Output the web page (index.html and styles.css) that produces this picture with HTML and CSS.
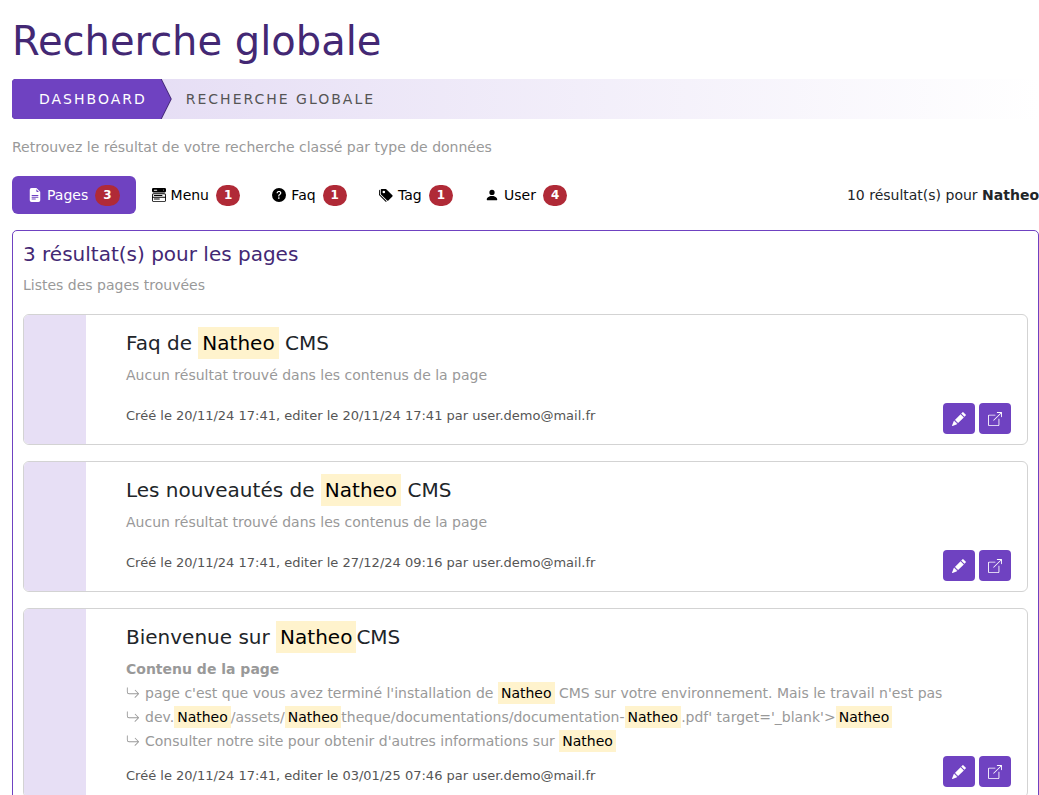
FILE: index.html
```html
<!DOCTYPE html>
<html lang="fr">
<head>
<meta charset="utf-8">
<title>Recherche globale</title>
<link rel="stylesheet" href="styles.css">
</head>
<body>
<svg class="sprite" aria-hidden="true">
  <symbol id="i-file" viewBox="0 0 16 16"><path d="M9.293 0H4a2 2 0 0 0-2 2v12a2 2 0 0 0 2 2h8a2 2 0 0 0 2-2V4.707A1 1 0 0 0 13.707 4L10 .293A1 1 0 0 0 9.293 0M9.500 3.500v-2l3 3h-2a1 1 0 0 1-1-1M4.500 9a.5.5 0 0 1 0-1h7a.5.5 0 0 1 0 1zM4 10.500a.5.5 0 0 1 .5-.5h7a.5.5 0 0 1 0 1h-7a.5.5 0 0 1-.5-.5m.5 2.500a.5.5 0 0 1 0-1h4a.5.5 0 0 1 0 1z"/></symbol>
  <symbol id="i-menu" viewBox="0 0 16 16"><path d="M1.500 0A1.500 1.500 0 0 0 0 1.500v2A1.500 1.500 0 0 0 1.500 5h13A1.500 1.500 0 0 0 16 3.500v-2A1.500 1.500 0 0 0 14.500 0zm1 2h3a.5.5 0 0 1 0 1h-3a.5.5 0 0 1 0-1m9.927.427A.25.25 0 0 1 12.604 2h.792a.25.25 0 0 1 .177.427l-.396.396a.25.25 0 0 1-.354 0zM0 8a2 2 0 0 1 2-2h12a2 2 0 0 1 2 2v6a2 2 0 0 1-2 2H2a2 2 0 0 1-2-2zm1 3v3a1 1 0 0 0 1 1h12a1 1 0 0 0 1-1v-3zm14-1V8a1 1 0 0 0-1-1H2a1 1 0 0 0-1 1v2zM2 8.500a.5.5 0 0 1 .5-.5h9a.5.5 0 0 1 0 1h-9a.5.5 0 0 1-.5-.5m0 4a.5.5 0 0 1 .5-.5h6a.5.5 0 0 1 0 1h-6a.5.5 0 0 1-.5-.5"/></symbol>
  <symbol id="i-help" viewBox="0 0 16 16"><path d="M16 8A8 8 0 1 1 0 8a8 8 0 0 1 16 0M5.496 6.033h.825c.138 0 .248-.113.266-.25.09-.656.54-1.134 1.342-1.134.686 0 1.314.343 1.314 1.168 0 .635-.374.927-.965 1.371-.673.489-1.206 1.060-1.168 1.987l.003.217a.25.25 0 0 0 .25.246h.811a.25.25 0 0 0 .25-.25v-.105c0-.718.273-.927 1.010-1.486.609-.463 1.244-.977 1.244-2.056 0-1.511-1.276-2.241-2.673-2.241-1.267 0-2.655.59-2.750 2.286a.237.237 0 0 0 .241.247m2.325 6.443c.61 0 1.029-.394 1.029-.927 0-.552-.42-.94-1.029-.94-.584 0-1.009.388-1.009.94 0 .533.425.927 1.010.927z"/></symbol>
  <symbol id="i-tags" viewBox="0 0 16 16"><path d="M2 2a1 1 0 0 1 1-1h4.586a1 1 0 0 1 .707.293l7 7a1 1 0 0 1 0 1.414l-4.586 4.586a1 1 0 0 1-1.414 0l-7-7A1 1 0 0 1 2 6.586zm3.500 4a1.500 1.500 0 1 0 0-3 1.500 1.500 0 0 0 0 3"/><path d="M1.293 7.793A1 1 0 0 1 1 7.086V2a1 1 0 0 0-1 1v4.586a1 1 0 0 0 .293.707l7 7a1 1 0 0 0 1.414 0l.043-.043z"/></symbol>
  <symbol id="i-user" viewBox="0 0 16 16"><path d="M3 14s-1 0-1-1 1-4 6-4 6 3 6 4-1 1-1 1zm5-6a3 3 0 1 0 0-6 3 3 0 0 0 0 6"/></symbol>
  <symbol id="i-pencil" viewBox="0 0 16 16"><path d="M12.854.146a.5.5 0 0 0-.707 0L10.500 1.793 14.207 5.500l1.647-1.646a.5.5 0 0 0 0-.708zm.646 6.061L9.793 2.500 3.293 9H3.500a.5.5 0 0 1 .5.5v.5h.5a.5.5 0 0 1 .5.5v.5h.5a.5.5 0 0 1 .5.5v.5h.5a.5.5 0 0 1 .5.5v.207zm-7.468 7.468A.5.5 0 0 1 6 13.500V13h-.5a.5.5 0 0 1-.5-.5V12h-.5a.5.5 0 0 1-.5-.5V11h-.5a.5.5 0 0 1-.5-.5V10h-.5a.5.5 0 0 1-.175-.032l-.179.178a.5.5 0 0 0-.11.168l-2 5a.5.5 0 0 0 .65.65l5-2a.5.5 0 0 0 .168-.11z"/></symbol>
  <symbol id="i-open" viewBox="0 0 16 16"><path d="M8.636 3.500a.5.5 0 0 0-.5-.5H1.500A1.500 1.500 0 0 0 0 4.500v10A1.500 1.500 0 0 0 1.500 16h10a1.500 1.500 0 0 0 1.500-1.500V7.864a.5.5 0 0 0-1 0V14.500a.5.5 0 0 1-.5.5h-10a.5.5 0 0 1-.5-.5v-10a.5.5 0 0 1 .5-.5h6.636a.5.5 0 0 0 .5-.5"/><path d="M16 .5a.5.5 0 0 0-.5-.5h-5a.5.5 0 0 0 0 1h3.793L6.146 9.146a.5.5 0 1 0 .708.708L15 1.707V5.500a.5.5 0 0 0 1 0z"/></symbol>
  <symbol id="i-return" viewBox="0 0 16 16"><path d="M1.500 1.500A.5.5 0 0 0 1 2v4.800a2.500 2.500 0 0 0 2.500 2.500h9.793l-3.347 3.346a.5.5 0 0 0 .708.708l4.200-4.200a.5.5 0 0 0 0-.708l-4-4a.5.5 0 0 0-.708.708L13.293 8.300H3.500A1.500 1.500 0 0 1 2 6.800V2a.5.5 0 0 0-.5-.5"/></symbol>
</svg>

<main class="page">
  <h1 class="page-title">Recherche globale</h1>

  <nav class="crumbs" aria-label="Fil d'Ariane">
    <a class="crumb-link" href="#"><span>Dashboard</span></a>
    <span class="crumb-current">Recherche globale</span>
  </nav>

  <p class="intro">Retrouvez le résultat de votre recherche classé par type de données</p>

  <div class="toolbar">
    <div class="tabs" role="tablist">
      <button class="tab tab-active" role="tab" aria-selected="true"><svg class="icon"><use href="#i-file"/></svg>Pages<span class="badge">3</span></button>
      <button class="tab" role="tab"><svg class="icon"><use href="#i-menu"/></svg>Menu<span class="badge">1</span></button>
      <button class="tab" role="tab"><svg class="icon"><use href="#i-help"/></svg>Faq<span class="badge">1</span></button>
      <button class="tab" role="tab"><svg class="icon"><use href="#i-tags"/></svg>Tag<span class="badge">1</span></button>
      <button class="tab" role="tab"><svg class="icon"><use href="#i-user"/></svg>User<span class="badge">4</span></button>
    </div>
    <div class="total">10 résultat(s) pour <b>Natheo</b></div>
  </div>

  <section class="panel">
    <h2 class="panel-title">3 résultat(s) pour les pages</h2>
    <p class="panel-sub">Listes des pages trouvées</p>

    <article class="card">
      <div class="card-side"></div>
      <div class="card-body">
        <h3 class="card-title">Faq de <mark>Natheo</mark> CMS</h3>
        <p class="card-text card-empty">Aucun résultat trouvé dans les contenus de la page</p>
        <div class="card-foot">
          <p class="meta">Créé le 20/11/24 17:41, editer le 20/11/24 17:41 par user.demo@mail.fr</p>
          <div class="actions">
            <a class="action" href="#" aria-label="Modifier"><svg class="icon"><use href="#i-pencil"/></svg></a>
            <a class="action" href="#" aria-label="Ouvrir"><svg class="icon"><use href="#i-open"/></svg></a>
          </div>
        </div>
      </div>
    </article>

    <article class="card">
      <div class="card-side"></div>
      <div class="card-body">
        <h3 class="card-title">Les nouveautés de <mark>Natheo</mark> CMS</h3>
        <p class="card-text card-empty">Aucun résultat trouvé dans les contenus de la page</p>
        <div class="card-foot">
          <p class="meta">Créé le 20/11/24 17:41, editer le 27/12/24 09:16 par user.demo@mail.fr</p>
          <div class="actions">
            <a class="action" href="#" aria-label="Modifier"><svg class="icon"><use href="#i-pencil"/></svg></a>
            <a class="action" href="#" aria-label="Ouvrir"><svg class="icon"><use href="#i-open"/></svg></a>
          </div>
        </div>
      </div>
    </article>

    <article class="card">
      <div class="card-side"></div>
      <div class="card-body">
        <h3 class="card-title">Bienvenue sur <mark>Natheo</mark>CMS</h3>
        <div class="card-text">
          <b>Contenu de la page</b>
          <ul class="hits">
            <li><svg class="icon"><use href="#i-return"/></svg><span>page c'est que vous avez terminé l'installation de <mark>Natheo</mark> CMS sur votre environnement. Mais le travail n'est pas</span></li>
            <li><svg class="icon"><use href="#i-return"/></svg><span>dev.<mark>Natheo</mark>/assets/<mark>Natheo</mark>theque/documentations/documentation-<mark>Natheo</mark>.pdf' target='_blank'&gt;<mark>Natheo</mark></span></li>
            <li><svg class="icon"><use href="#i-return"/></svg><span>Consulter notre site pour obtenir d'autres informations sur <mark>Natheo</mark></span></li>
          </ul>
        </div>
        <div class="card-foot card-foot-end">
          <p class="meta">Créé le 20/11/24 17:41, editer le 03/01/25 07:46 par user.demo@mail.fr</p>
          <div class="actions">
            <a class="action" href="#" aria-label="Modifier"><svg class="icon"><use href="#i-pencil"/></svg></a>
            <a class="action" href="#" aria-label="Ouvrir"><svg class="icon"><use href="#i-open"/></svg></a>
          </div>
        </div>
      </div>
    </article>
  </section>
</main>
</body>
</html>
```

FILE: styles.css
```css
* { box-sizing: border-box; }

body {
  margin: 0;
  background: #fff;
  color: #212529;
  font-family: Verdana, "DejaVu Sans", sans-serif;
  font-size: 14px;
  line-height: 24px;
}

h1, h2, h3, p, ul { margin: 0; padding: 0; font-weight: 400; }

.sprite { display: none; }

.icon { width: 14px; height: 14px; fill: currentColor; flex: none; }

.page {
  height: 100vh;
  overflow: hidden;
  padding: 17px 0 0 12px;
}

.page-title {
  margin-bottom: 14px;
  color: #432874;
  font-size: 40px;
  line-height: 48px;
}

.crumbs {
  display: flex;
  height: 40px;
  border-radius: 4px;
  background: linear-gradient(to right, #e2d9f3, #fff);
  line-height: 40px;
  letter-spacing: 2px;
  text-transform: uppercase;
  overflow: hidden;
}

.crumb-link {
  padding-right: 1px;
  background: #432874;
  color: #fff;
  text-decoration: none;
  clip-path: polygon(0 0, calc(100% - 10px) 0, 100% 50%, calc(100% - 10px) 100%, 0 100%);
}

.crumb-link span {
  display: block;
  padding: 0 24px 0 27px;
  background: #6f42c1;
  clip-path: polygon(0 0, calc(100% - 10px) 0, 100% 50%, calc(100% - 10px) 100%, 0 100%);
}

.crumb-current { padding-left: 14px; color: #555; }

.intro { margin: 16px 0 17px; color: #999; }

.toolbar { display: flex; justify-content: space-between; align-items: center; }

.tabs { display: flex; }

.tab {
  display: flex;
  align-items: center;
  gap: 5px;
  height: 38px;
  padding: 0 16px;
  border: 0;
  border-radius: 6px;
  background: none;
  color: #000;
  font: inherit;
}

.tab-active { background: #6f42c1; color: #fff; }

.badge {
  margin-left: 2px;
  padding: 0 8px;
  border-radius: 11px;
  background: #b02a37;
  color: #fff;
  font-size: 12px;
  font-weight: 700;
  line-height: 21px;
}

.panel {
  margin-top: 16px;
  padding: 10px;
  border: 1px solid #6f42c1;
  border-radius: 5px;
}

.panel-title { color: #432874; font-size: 20px; line-height: 26px; }

.panel-sub { margin: 6px 0 17px; color: #999; }

.card {
  display: flex;
  margin-bottom: 16px;
  border: 1px solid #d3d3d3;
  border-radius: 6px;
  overflow: hidden;
}

.card-side { flex: none; width: 62px; background: #e7dff5; }

.card-body { flex: 1; padding: 16px 16px 10px 40px; }

.card-title { margin-bottom: 7px; font-size: 20px; line-height: 25px; }

.card-text { color: #999; }

.card-empty { margin-bottom: 16px; }

mark { padding: 4px; background: #fff3cd; color: #000; }

.card-text mark { padding: 3px; }

.hits { margin-bottom: 3px; list-style: none; }

.hits li { display: flex; align-items: center; gap: 5px; }

.card-foot { display: flex; justify-content: space-between; }

.card-foot-end { align-items: flex-end; }

.meta { padding-top: 2px; color: #555; font-size: 13px; line-height: 22px; }

.actions { display: flex; gap: 4px; }

.action {
  display: flex;
  align-items: center;
  justify-content: center;
  width: 32px;
  height: 31px;
  border-radius: 4px;
  background: #6f42c1;
  color: #fff;
}
```
